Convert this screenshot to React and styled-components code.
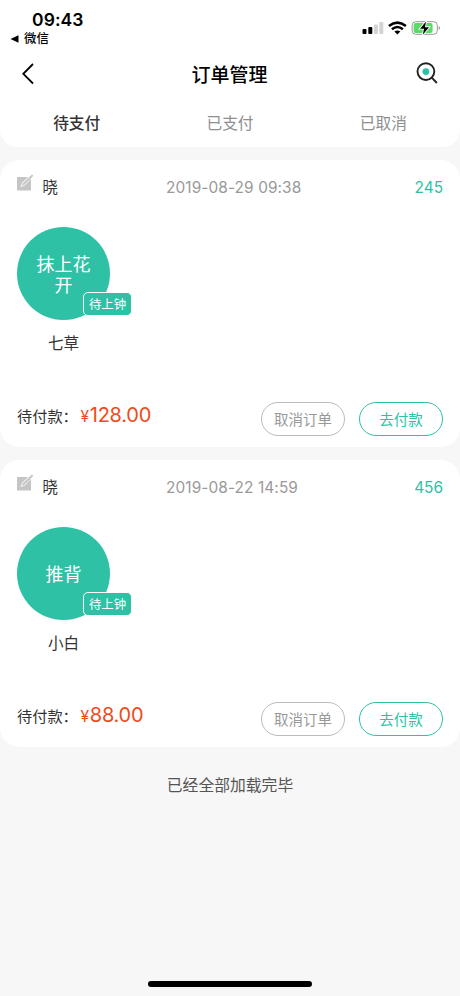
import React from "react";
import styled, { createGlobalStyle } from "styled-components";

const GREEN = "#2ec1a5";

const GlobalStyle = createGlobalStyle`
  *, *::before, *::after { box-sizing: border-box; }
  body {
    margin: 0;
    background: #f7f7f7;
    font-family: Inter, "Noto Sans CJK SC", sans-serif;
    color: #333;
  }
  button { font: inherit; background: none; border: 0; padding: 0; margin: 0; }
`;

const Screen = styled.div`
  display: flex;
  flex-direction: column;
  width: 460px;
  height: 996px;
  overflow: hidden;
  background: #f7f7f7;
`;

const TopPanel = styled.header`
  flex: none;
  height: 147px;
  background: #fff;
  border-radius: 0 0 17px 17px;
`;

const StatusBar = styled.div`
  display: flex;
  justify-content: space-between;
  height: 48px;
  padding: 9px 19px 0 10px;
  color: #000;
`;

const Clock = styled.div`
  padding-left: 22px;
  font-size: 17.5px;
  font-weight: 600;
  line-height: 22px;
  letter-spacing: 0.1px;
`;

const BackToApp = styled.div`
  display: flex;
  align-items: center;
  gap: 5px;
  height: 16px;
  font-size: 12.4px;
  font-weight: 500;
  line-height: 16px;
`;

const StatusIcons = styled.svg`
  width: 82px;
  height: 18px;
  margin-top: 10px;
`;

const NavBar = styled.div`
  display: grid;
  grid-template-columns: 24px 1fr 24px;
  align-items: center;
  height: 50px;
  padding: 0 21px 0 16px;
`;

const NavButton = styled.button`
  display: flex;
  width: 24px;
  height: 24px;
`;

const Title = styled.h1`
  margin: 0;
  padding: 5px 0 0 4px;
  text-align: center;
  font-size: 19px;
  font-weight: 500;
  line-height: 24px;
  color: #000;
`;

const Tabs = styled.nav`
  display: grid;
  grid-template-columns: repeat(3, 1fr);
  height: 49px;
`;

const Tab = styled.button`
  padding-top: 2px;
  font-size: 15.7px;
  line-height: 47px;
  font-weight: ${(p) => (p.$active ? 500 : 400)};
  color: ${(p) => (p.$active ? "#333" : "#909090")};
`;

const Card = styled.article`
  flex: none;
  display: flex;
  flex-direction: column;
  height: 287px;
  margin-top: 13px;
  padding: 15px 17px 11px;
  background: #fff;
  border-radius: 19px;
`;

const CardHeader = styled.div`
  display: grid;
  grid-template-columns: 25.5px 123.5px 1fr auto;
  height: 24px;
  line-height: 24px;
`;

const EditIcon = styled.svg`
  width: 17px;
  height: 18px;
  margin-top: -1px;
`;

const Customer = styled.span`
  padding-top: 1px;
  font-size: 15.4px;
`;

const DateText = styled.span`
  padding-top: 1px;
  font-size: 15.4px;
  letter-spacing: 0.1px;
  white-space: nowrap;
  color: #999;
`;

const OrderNumber = styled.span`
  padding-top: 1px;
  font-size: 15.4px;
  color: ${GREEN};
`;

const Service = styled.div`
  width: 93px;
  margin-top: 28px;
`;

const Disc = styled.div`
  position: relative;
  display: flex;
  align-items: center;
  justify-content: center;
  width: 93px;
  height: 93px;
  padding: 2px 18px 0;
  border-radius: 50%;
  background: ${GREEN};
  color: #fff;
  text-align: center;
  font-size: 18px;
  line-height: 21px;
`;

const Badge = styled.span`
  position: absolute;
  left: 66px;
  top: 65px;
  width: 49px;
  height: 24px;
  padding-top: 1px;
  border: 1px solid #fff;
  border-radius: 5px;
  background: ${GREEN};
  font-size: 12.4px;
  line-height: 22px;
  white-space: nowrap;
`;

const ServiceName = styled.div`
  margin-top: 12px;
  text-align: center;
  font-size: 15.6px;
  line-height: 24px;
`;

const CardFooter = styled.div`
  display: flex;
  align-items: center;
  height: 34px;
  margin-top: auto;
`;

const DueLabel = styled.span`
  width: 63.5px;
  margin-top: -4px;
  font-size: 15.2px;
  line-height: 24px;
  white-space: nowrap;
`;

const Price = styled.span`
  margin-top: -7px;
  font-size: 20px;
  line-height: 24px;
  letter-spacing: -0.25px;
  color: #f04a1c;
`;

const Currency = styled.small`
  margin-right: 1px;
  font-size: 15.5px;
`;

const Actions = styled.div`
  display: flex;
  gap: 14px;
  margin-left: auto;
`;

const ActionButton = styled.button`
  width: 84px;
  height: 34px;
  padding-top: 1px;
  border: 1px solid ${(p) => (p.$primary ? GREEN : "#bbb")};
  border-radius: 17px;
  font-size: 14.5px;
  line-height: 31px;
  color: ${(p) => (p.$primary ? GREEN : "#999")};
`;

const EndMessage = styled.p`
  margin: 27px 0 0;
  text-align: center;
  font-size: 15.8px;
  line-height: 24px;
  color: #555;
`;

const HomeIndicator = styled.div`
  flex: none;
  width: 164px;
  height: 6px;
  margin: auto auto 9px 148px;
  border-radius: 3px;
  background: #000;
`;

function DeviceStatus() {
  return (
    <StatusIcons viewBox="0 0 82 18">
      <rect x="3.5" y="10" width="4" height="5" rx="1" />
      <rect x="9.3" y="8" width="4" height="7" rx="1" />
      <rect x="14.9" y="5.5" width="4" height="9.5" rx="1" fill="#d3d3d3" />
      <rect x="20.3" y="3" width="4" height="12" rx="1" fill="#d3d3d3" />
      <g fill="none" stroke="#000" strokeWidth="2.5">
        <path d="M29.9 7Q38.4 .2 46.9 7" />
        <path d="M32.9 10.3Q38.4 5.8 43.9 10.3" />
      </g>
      <path d="M35.4 12.6Q38.4 10.2 41.4 12.6L38.4 15.4Z" />
      <rect x="53.1" y="2.7" width="25.2" height="12.6" rx="3.6" fill="none" stroke="#999" />
      <path d="M79.6 7v4q1.4-.6 1.4-2T79.6 7" fill="#999" />
      <rect x="54.6" y="4.1" width="19" height="9.8" rx="2.2" fill="#5bd969" />
      <path d="M67 2.5 61 9.7h4l-1.2 6.1 6.2-7.6h-4z" fill="#000" stroke="#fff" strokeWidth="1.8" paintOrder="stroke" />
    </StatusIcons>
  );
}

function OrderCard({ customer, date, number, service, name, amount }) {
  return (
    <Card>
      <CardHeader>
        <EditIcon viewBox="0 0 17 18">
          <rect y="3" width="14" height="13.5" fill="#c5c5c5" />
          <path d="M3.6 13.2 5 8.9 14.2 0 17 1.8 7.7 11.6Z" fill="#fff" />
          <path d="m4.7 12 1.2-2.8L14.9.5l1.5 1.3-9.2 9.1Z" fill="#c5c5c5" />
        </EditIcon>
        <Customer>{customer}</Customer>
        <DateText>{date}</DateText>
        <OrderNumber>{number}</OrderNumber>
      </CardHeader>
      <Service>
        <Disc>
          {service}
          <Badge>待上钟</Badge>
        </Disc>
        <ServiceName>{name}</ServiceName>
      </Service>
      <CardFooter>
        <DueLabel>待付款：</DueLabel>
        <Price><Currency>¥</Currency>{amount}</Price>
        <Actions>
          <ActionButton>取消订单</ActionButton>
          <ActionButton $primary>去付款</ActionButton>
        </Actions>
      </CardFooter>
    </Card>
  );
}

const orders = [
  { customer: "晓", date: "2019-08-29 09:38", number: "245", service: "抹上花开", name: "七草", amount: "128.00" },
  { customer: "晓", date: "2019-08-22 14:59", number: "456", service: "推背", name: "小白", amount: "88.00" },
];

export default function App() {
  return (
    <>
      <GlobalStyle />
      <Screen>
        <TopPanel>
          <StatusBar>
            <div>
              <Clock>09:43</Clock>
              <BackToApp>
                <svg width="9" height="8" viewBox="0 0 9 8"><path d="M.5 4 8.5 .2v7.6Z" /></svg>
                微信
              </BackToApp>
            </div>
            <DeviceStatus />
          </StatusBar>
          <NavBar>
            <NavButton aria-label="返回">
              <svg width="24" height="24" viewBox="0 0 24 24" fill="none" stroke="#000" strokeWidth="1.8">
                <path d="M17 3 7.3 12.8 17 22.5" />
              </svg>
            </NavButton>
            <Title>订单管理</Title>
            <NavButton aria-label="搜索">
              <svg width="24" height="24" viewBox="0 0 24 24" fill="none" stroke="#222" strokeWidth="1.9">
                <circle cx="10.9" cy="10.6" r="8.4" />
                <path d="m16.8 16.6 5 5.4" />
                <circle cx="10.9" cy="10.6" r="3.4" fill={GREEN} stroke="none" />
              </svg>
            </NavButton>
          </NavBar>
          <Tabs>
            <Tab $active>待支付</Tab>
            <Tab>已支付</Tab>
            <Tab>已取消</Tab>
          </Tabs>
        </TopPanel>
        {orders.map((order) => (
          <OrderCard key={order.number} {...order} />
        ))}
        <EndMessage>已经全部加载完毕</EndMessage>
        <HomeIndicator />
      </Screen>
    </>
  );
}
